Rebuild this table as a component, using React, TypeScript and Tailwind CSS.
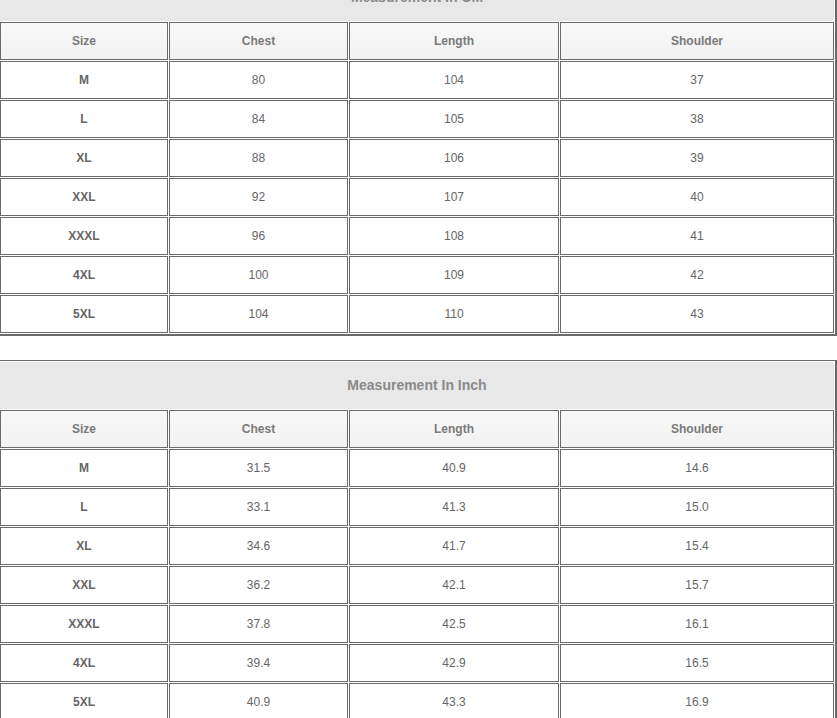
const cmRows = [
  ["M", "80", "104", "37"],
  ["L", "84", "105", "38"],
  ["XL", "88", "106", "39"],
  ["XXL", "92", "107", "40"],
  ["XXXL", "96", "108", "41"],
  ["4XL", "100", "109", "42"],
  ["5XL", "104", "110", "43"],
];

const inchRows = [
  ["M", "31.5", "40.9", "14.6"],
  ["L", "33.1", "41.3", "15.0"],
  ["XL", "34.6", "41.7", "15.4"],
  ["XXL", "36.2", "42.1", "15.7"],
  ["XXXL", "37.8", "42.5", "16.1"],
  ["4XL", "39.4", "42.9", "16.5"],
  ["5XL", "40.9", "43.3", "16.9"],
];

const headers = ["Size", "Chest", "Length", "Shoulder"];

function SizeTable({ title, rows, className }: { title: string; rows: string[][]; className?: string }) {
  return (
    <table
      className={`-ml-[2px] w-[839px] table-fixed border-separate border-spacing-[1px] border border-r-2 border-b-2 border-[#6a6a6a] border-l-[#d8d8d8] ${className ?? ""}`}
    >
      <colgroup>
        <col className="w-[168px]" />
        <col className="w-[179px]" />
        <col className="w-[210px]" />
        <col />
      </colgroup>
      <thead>
        <tr>
          <th colSpan={4} className="h-[47px] bg-[#e8e8e8] p-0 text-center text-[14px] font-bold text-[#8a8a8a]">
            {title}
          </th>
        </tr>
        <tr>
          {headers.map((h) => (
            <th
              key={h}
              className="h-[38px] border border-[#6a6a6a] bg-gradient-to-b from-[#f8f8f8] to-[#f2f2f2] p-0 text-center text-[12px] font-bold text-[#7a7a7a]"
            >
              {h}
            </th>
          ))}
        </tr>
      </thead>
      <tbody>
        {rows.map((r) => (
          <tr key={r[0]}>
            {r.map((v, i) => (
              <td
                key={i}
                className={`h-[38px] border border-[#6a6a6a] bg-white p-0 text-center text-[12px] text-[#666] ${i === 0 ? "font-bold" : ""}`}
              >
                {v}
              </td>
            ))}
          </tr>
        ))}
      </tbody>
    </table>
  );
}

export default function App() {
  return (
    <div className="h-[718px] w-[837px] overflow-hidden bg-white font-['Liberation_Sans',Arial,sans-serif]">
      <SizeTable title="Measurement In CM" rows={cmRows} className="-mt-[28px]" />
      <SizeTable title="Measurement In Inch" rows={inchRows} className="mt-[24px]" />
    </div>
  );
}
